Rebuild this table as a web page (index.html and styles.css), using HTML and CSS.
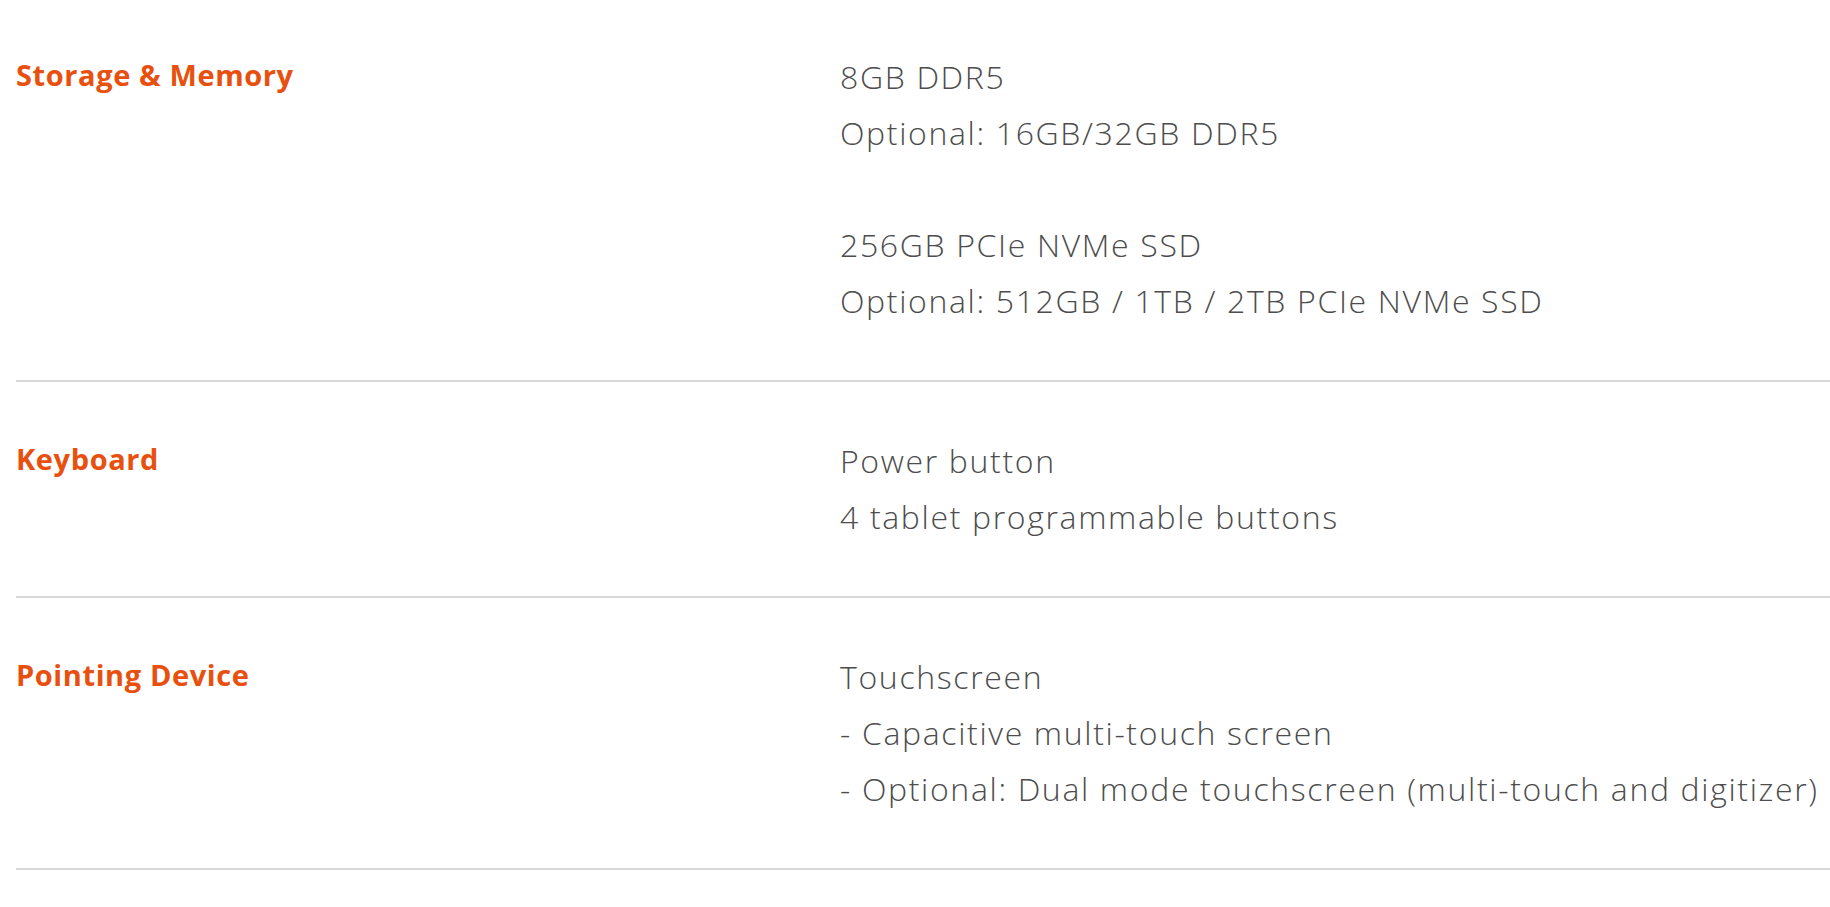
FILE: index.html
```html
<!DOCTYPE html>
<html lang="en">
<head>
<meta charset="utf-8">
<title>Specs</title>
<link rel="stylesheet" href="styles.css">
</head>
<body>
<div class="specs">
  <div class="row first">
    <div class="label">Storage &amp; Memory</div>
    <div class="value">
      <p>8GB DDR5<br>Optional: 16GB/32GB DDR5</p>
      <p>256GB PCIe NVMe SSD<br>Optional: 512GB / 1TB / 2TB PCIe NVMe SSD</p>
    </div>
  </div>
  <div class="row">
    <div class="label">Keyboard</div>
    <div class="value">
      <p>Power button<br>4 tablet programmable buttons</p>
    </div>
  </div>
  <div class="row">
    <div class="label">Pointing Device</div>
    <div class="value">
      <p>Touchscreen<br>- Capacitive multi-touch screen<br>- Optional: Dual mode touchscreen (multi-touch and digitizer)</p>
    </div>
  </div>
</div>
</body>
</html>
```
FILE: styles.css
```css
html, body {
  margin: 0;
  padding: 0;
  background: #fff;
}
body {
  font-family: "Open Sans", "Lato", sans-serif;
  overflow: hidden;
}
.specs {
  padding-left: 16px;
}
.row {
  display: grid;
  grid-template-columns: 824px 1fr;
  padding: 51px 0 51px;
  border-bottom: 2px solid #d9d9d9;
}
.row.first {
  padding-top: 49px;
}
.label {
  color: #e8500f;
  font-weight: 700;
  font-size: 29px;
  letter-spacing: 0.6px;
  line-height: 52px;
}
.value {
  color: #4d4d4d;
  font-weight: 300;
  font-size: 32px;
  letter-spacing: 1.65px;
  line-height: 56px;
}
.value p {
  margin: 0;
}
.value p + p {
  margin-top: 56px;
}
```
